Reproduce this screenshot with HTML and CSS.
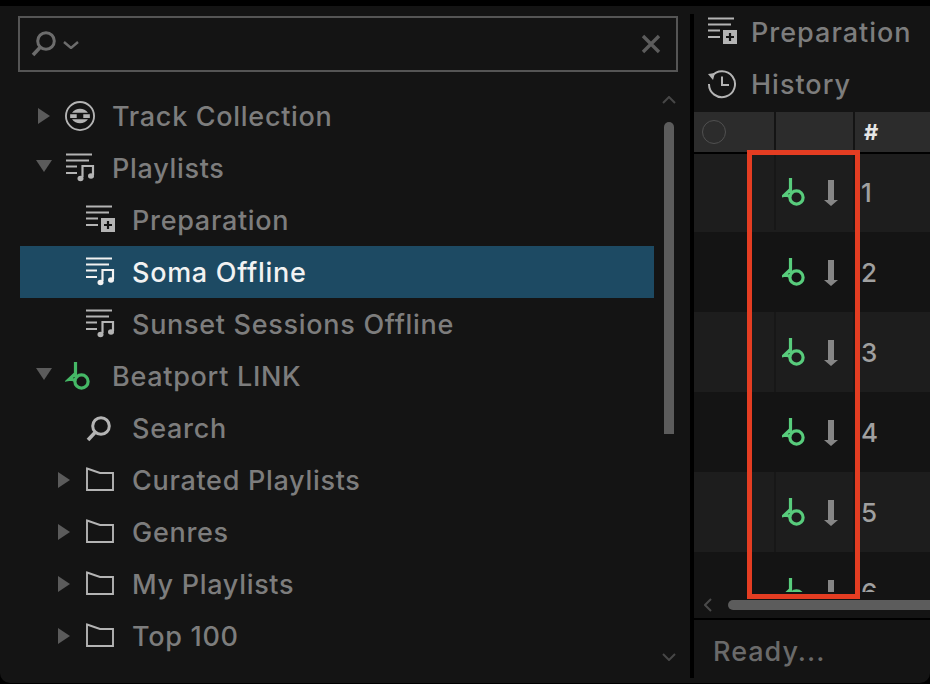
FILE: index.html
```html
<!DOCTYPE html>
<html lang="en">
<head>
<meta charset="utf-8">
<title>Browser</title>
<link rel="stylesheet" href="styles.css">
</head>
<body>
<svg class="defs" width="0" height="0" aria-hidden="true">
  <symbol id="i-list" viewBox="0 0 30 30">
    <path d="M1 1.500H27M1 7.500H24M1 13.500H12M1 20H12" fill="none" stroke="currentColor" stroke-width="1.900"/>
    <path d="M17.500 24V13H28V22" fill="none" stroke="currentColor" stroke-width="2.200"/>
    <ellipse cx="15.500" cy="25.500" rx="3" ry="2.700" fill="currentColor"/>
    <ellipse cx="26" cy="23" rx="3" ry="2.700" fill="currentColor"/>
  </symbol>
  <symbol id="i-add" viewBox="0 0 30 30">
    <path d="M1 1.500H27M1 7.500H24M1 13.500H13M1 20H13" fill="none" stroke="currentColor" stroke-width="1.900"/>
    <rect x="16" y="13" width="14" height="14" fill="currentColor"/>
    <path d="M23 16V24M19 20H27" fill="none" stroke="#141414" stroke-width="2.200"/>
  </symbol>
  <symbol id="i-link" viewBox="0 0 26 30">
    <path d="M8.500 1V16M9 12L2 18.500C5 18 7.500 18.500 8.500 20" fill="none" stroke="currentColor" stroke-width="3.200"/>
    <circle cx="14.500" cy="20.500" r="6.600" fill="none" stroke="currentColor" stroke-width="3.200"/>
  </symbol>
  <symbol id="i-search" viewBox="0 0 30 30">
    <circle cx="16" cy="13" r="8.300" fill="none" stroke="currentColor" stroke-width="3"/>
    <path d="M10 19.500L3 27" fill="none" stroke="currentColor" stroke-width="3.600"/>
  </symbol>
  <symbol id="i-folder" viewBox="0 0 30 30">
    <path d="M2 3.500L15 8H28V25H2Z" fill="none" stroke="currentColor" stroke-width="1.900"/>
  </symbol>
  <symbol id="i-record" viewBox="0 0 32 32">
    <circle cx="16" cy="16" r="15" fill="none" stroke="currentColor" stroke-width="2"/>
    <path d="M7.500 12.500A10.500 10.500 0 0 1 24.500 12.500ZM7.500 19.500A10.500 10.500 0 0 0 24.500 19.500ZM5.500 14H12.500V18H5.500ZM19.500 14H26.500V18H19.500Z" fill="currentColor"/>
  </symbol>
  <symbol id="i-history" viewBox="0 0 30 30">
    <path d="M4.500 7.500A13 13 0 1 1 2 15" fill="none" stroke="currentColor" stroke-width="2"/>
    <path d="M1 5L8 4L6 11Z" fill="currentColor"/>
    <path d="M15 7.500V16H22" fill="none" stroke="currentColor" stroke-width="2"/>
  </symbol>
  <symbol id="i-down" viewBox="0 0 16 28">
    <path d="M5 1H11V21H15L8 27L1 21H5Z" fill="currentColor"/>
  </symbol>
</svg>

<div class="app">
  <section class="browser">
    <div class="searchbox">
      <svg class="search-icon"><use href="#i-search"/></svg>
      <svg class="search-chevron" viewBox="0 0 16 8"><path d="M1 1L8 7L15 1" fill="none" stroke="currentColor" stroke-width="2.400"/></svg>
      <svg class="search-clear" viewBox="0 0 20 20"><path d="M2 2L18 18M18 2L2 18" fill="none" stroke="currentColor" stroke-width="3.400"/></svg>
    </div>
    <div class="tree-wrap">
      <ul class="tree">
        <li class="node lvl0"><span class="caret right"></span><svg class="icon"><use href="#i-record"/></svg><span>Track Collection</span></li>
        <li class="node lvl0"><span class="caret down"></span><svg class="icon"><use href="#i-list"/></svg><span>Playlists</span></li>
        <li class="node lvl1"><span class="caret"></span><svg class="icon"><use href="#i-add"/></svg><span>Preparation</span></li>
        <li class="node lvl1 selected"><span class="caret"></span><svg class="icon"><use href="#i-list"/></svg><span>Soma Offline</span></li>
        <li class="node lvl1"><span class="caret"></span><svg class="icon"><use href="#i-list"/></svg><span>Sunset Sessions Offline</span></li>
        <li class="node lvl0"><span class="caret down"></span><svg class="icon green"><use href="#i-link"/></svg><span>Beatport LINK</span></li>
        <li class="node lvl1"><span class="caret"></span><svg class="icon"><use href="#i-search"/></svg><span>Search</span></li>
        <li class="node lvl1"><span class="caret right"></span><svg class="icon"><use href="#i-folder"/></svg><span>Curated Playlists</span></li>
        <li class="node lvl1"><span class="caret right"></span><svg class="icon"><use href="#i-folder"/></svg><span>Genres</span></li>
        <li class="node lvl1"><span class="caret right"></span><svg class="icon"><use href="#i-folder"/></svg><span>My Playlists</span></li>
        <li class="node lvl1"><span class="caret right"></span><svg class="icon"><use href="#i-folder"/></svg><span>Top 100</span></li>
      </ul>
      <div class="vscroll">
        <svg class="vs-arrow" viewBox="0 0 14 8"><path d="M1 7L7 1L13 7" fill="none" stroke="currentColor" stroke-width="2"/></svg>
        <div class="vs-thumb"></div>
        <svg class="vs-arrow vs-bottom" viewBox="0 0 14 8"><path d="M1 1L7 7L13 1" fill="none" stroke="currentColor" stroke-width="2"/></svg>
      </div>
    </div>
  </section>

  <div class="divider"></div>

  <section class="tracks">
    <div class="nav-row"><svg class="icon"><use href="#i-add"/></svg><span>Preparation</span></div>
    <div class="nav-row"><svg class="icon"><use href="#i-history"/></svg><span>History</span></div>
    <div class="thead">
      <div class="cell c1"><span class="radio"></span></div>
      <div class="cell c2"></div>
      <div class="cell c3 hash">#</div>
    </div>
    <div class="tbody">
      <div class="trow light"><div class="cell c1"></div><div class="cell c2"><svg class="t-link"><use href="#i-link"/></svg><svg class="t-down"><use href="#i-down"/></svg></div><div class="cell c3">1</div></div>
      <div class="trow"><div class="cell c1"></div><div class="cell c2"><svg class="t-link"><use href="#i-link"/></svg><svg class="t-down"><use href="#i-down"/></svg></div><div class="cell c3">2</div></div>
      <div class="trow light"><div class="cell c1"></div><div class="cell c2"><svg class="t-link"><use href="#i-link"/></svg><svg class="t-down"><use href="#i-down"/></svg></div><div class="cell c3">3</div></div>
      <div class="trow"><div class="cell c1"></div><div class="cell c2"><svg class="t-link"><use href="#i-link"/></svg><svg class="t-down"><use href="#i-down"/></svg></div><div class="cell c3">4</div></div>
      <div class="trow light"><div class="cell c1"></div><div class="cell c2"><svg class="t-link"><use href="#i-link"/></svg><svg class="t-down"><use href="#i-down"/></svg></div><div class="cell c3">5</div></div>
      <div class="trow"><div class="cell c1"></div><div class="cell c2"><svg class="t-link"><use href="#i-link"/></svg><svg class="t-down"><use href="#i-down"/></svg></div><div class="cell c3">6</div></div>
    </div>
    <div class="hscroll">
      <svg class="hs-arrow" viewBox="0 0 8 14"><path d="M7 1L1 7L7 13" fill="none" stroke="currentColor" stroke-width="2"/></svg>
      <div class="hs-thumb"></div>
    </div>
    <div class="status">Ready...</div>
    <div class="highlight"></div>
  </section>
</div>
</body>
</html>
```

FILE: styles.css
```css
* { box-sizing: border-box; }

html, body {
  margin: 0;
  height: 100%;
  overflow: hidden;
  background: #000;
}

body {
  padding-top: 6px;
  font-family: Inter, "Liberation Sans", sans-serif;
  font-size: 27px;
  font-weight: 500;
  letter-spacing: 0.7px;
  color: #7d7d7d;
}

.defs { position: absolute; }

.app {
  display: flex;
  height: 677px;
  background: #141414;
  border-radius: 0 0 10px 10px;
  overflow: hidden;
}

/* left browser tree */
.browser {
  width: 690px;
  flex: none;
  padding: 10px 12px 0 18px;
}

.searchbox {
  display: flex;
  align-items: center;
  height: 56px;
  border: 2px solid #555;
  padding: 0 15px 0 10px;
  color: #6c6c6c;
}

.search-icon { width: 30px; height: 30px; margin-top: -3px; }
.search-chevron { width: 16px; height: 8px; margin: 1px 0 0 3px; }
.search-clear { width: 20px; height: 20px; margin-left: auto; color: #5c5c5c; }

.tree-wrap {
  display: flex;
  margin-top: 18px;
  padding-left: 2px;
}

.tree {
  list-style: none;
  margin: 0;
  padding: 0;
  width: 634px;
}

.node {
  display: flex;
  align-items: center;
  height: 52px;
  white-space: nowrap;
}

.lvl0 { padding-left: 16px; }
.lvl1 { padding-left: 36px; }

.selected {
  background: #1d4a63;
  color: #f2f2f2;
}

.caret {
  position: relative;
  width: 16px;
  height: 16px;
  margin-right: 13px;
  flex: none;
}

.caret.right::before {
  content: "";
  position: absolute;
  left: 2px;
  top: 0;
  border-left: 12px solid #5b5b5b;
  border-top: 8px solid transparent;
  border-bottom: 8px solid transparent;
}

.caret.down::before {
  content: "";
  position: absolute;
  left: 0;
  top: 0;
  border-top: 12px solid #5b5b5b;
  border-left: 8px solid transparent;
  border-right: 8px solid transparent;
}

.icon {
  width: 30px;
  height: 30px;
  flex: none;
  margin-right: 17px;
  color: #b4b4b4;
}

.selected .icon { color: #f2f2f2; }
.node .green { color: #45b866; }

/* tree scrollbar */
.vscroll {
  position: relative;
  width: 10px;
  height: 572px;
  margin-left: 10px;
  display: flex;
  flex-direction: column;
  align-items: center;
  color: #474747;
}

.vs-arrow { width: 14px; height: 8px; margin-top: 6px; flex: none; }
.vs-bottom { margin-top: 219px; }

.vs-thumb {
  width: 10px;
  height: 312px;
  margin-top: 18px;
  background: #5c5c5c;
  border-radius: 5px 5px 0 0;
  flex: none;
}

.divider {
  width: 4px;
  flex: none;
  margin: 8px 0 5px;
  background: #000;
}

/* right track list */
.tracks {
  position: relative;
  flex: 1;
  min-width: 0;
}

.nav-row {
  display: flex;
  align-items: center;
  height: 52px;
  padding-left: 13px;
  letter-spacing: 1px;
  white-space: nowrap;
  overflow: hidden;
}

.nav-row .icon { margin-right: 14px; }

.thead {
  display: flex;
  height: 42px;
  margin-top: 2px;
  border-bottom: 2px solid #000;
  background: #000;
}

.cell {
  display: flex;
  align-items: center;
  flex: none;
}

.c1 { width: 80px; }
.c2 { width: 79px; border-left: 2px solid #171717; }
.c3 { flex: 1; border-left: 2px solid #171717; padding-left: 6px; color: #a0a0a0; font-size: 26px; }

.thead .cell { background: #2c2c2c; }
.thead .c2, .thead .c3 { border-left-color: #141414; }
.thead .hash { color: #e6e6e6; font-weight: 700; font-size: 22px; padding-left: 9px; }

.radio {
  width: 24px;
  height: 24px;
  margin-left: 8px;
  border: 1.500px solid #505050;
  border-radius: 50%;
}

.tbody {
  height: 438px;
  overflow: hidden;
}

.trow {
  display: flex;
  height: 80px;
}

.trow:first-child {
  height: 78px;
  padding-bottom: 2px;
}

.trow.light { background: #1d1d1d; }
.trow:not(.light) .c2, .trow:not(.light) .c3 { border-left-color: transparent; }

.t-link {
  width: 26px;
  height: 30px;
  margin-left: 6px;
  color: #58cc7c;
  flex: none;
}

.t-down {
  width: 16px;
  height: 28px;
  margin: 2px 0 0 15px;
  color: #868686;
  flex: none;
}

.hscroll {
  display: flex;
  align-items: center;
  height: 28px;
  border-bottom: 2px solid #000;
  padding-left: 10px;
  color: #4a4a4a;
}

.hs-arrow { width: 8px; height: 14px; flex: none; }

.hs-thumb {
  flex: 1;
  height: 10px;
  margin-left: 16px;
  background: #5c5c5c;
  border-radius: 5px 0 0 5px;
}

.status {
  padding: 16px 0 0 19px;
  color: #6a6a6a;
  line-height: 32px;
  letter-spacing: 1px;
}

/* annotation laid over the table */
.highlight {
  position: absolute;
  left: 53px;
  top: 144px;
  width: 113px;
  height: 449px;
  border: 5px solid #e43d22;
}
```
